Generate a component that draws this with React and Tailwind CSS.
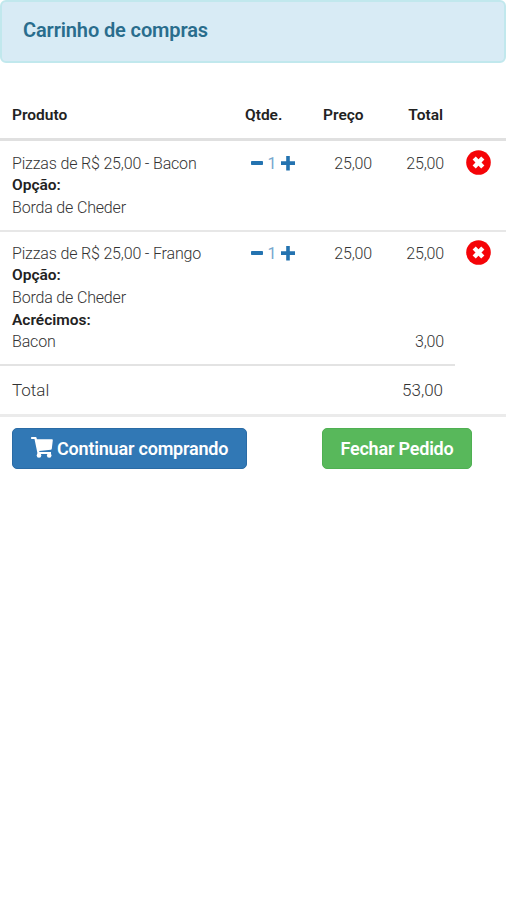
import React, { useState } from 'react';

const initialItems = [
  { id: 1, name: 'Pizzas de R$ 25,00 - Bacon', qty: 1, price: 25, option: 'Borda de Cheder', extras: [] },
  {
    id: 2,
    name: 'Pizzas de R$ 25,00 - Frango',
    qty: 1,
    price: 25,
    option: 'Borda de Cheder',
    extras: [{ name: 'Bacon', price: 3 }]
  }
];

const formatPrice = (value) => value.toFixed(2).replace('.', ',');

const MinusIcon = () => (
  <svg viewBox="0 0 12 15" className="w-3 h-[15px]" fill="currentColor">
    <rect x="0" y="5" width="12" height="4" rx="0.8" />
  </svg>
);

const PlusIcon = () => (
  <svg viewBox="0 0 14 15" className="w-3.5 h-[15px]" fill="currentColor">
    <path d="M5.2 0h3.6v5.2H14v3.8H8.8v5.5H5.2V9H0V5.2h5.2z" />
  </svg>
);

const RemoveIcon = () => (
  <svg viewBox="0 0 25 25" className="w-[25px] h-[25px]">
    <circle cx="12.5" cy="12.5" r="12.3" fill="#f50408" />
    <path d="M8.2 8l8.6 9M16.8 8l-8.6 9" stroke="#fff" strokeWidth="4.4" strokeLinecap="butt" />
  </svg>
);

const CartIcon = () => (
  <svg viewBox="0 0 22 22" className="w-[22px] h-[22px] mr-1 -mt-1" fill="currentColor">
    <path d="M0.6 1h4c.6 0 .9.3 1 .9l.3 1.4H21c.6 0 .9.4.8 1l-1 8.4c-.1.6-.5.9-1 1L8.2 14.9l.2 1.1h11.6v2H6.6L3.5 3H.6C-.2 3-.2 1 .6 1z" />
    <circle cx="8" cy="19.4" r="2.3" />
    <circle cx="18.2" cy="19.4" r="2.3" />
  </svg>
);

const App = () => {
  const [items, setItems] = useState(initialItems);

  const changeQty = (id, delta) => {
    setItems(prev => prev.map(i => (i.id === id ? { ...i, qty: Math.max(1, i.qty + delta) } : i)));
  };

  const removeItem = (id) => {
    setItems(prev => prev.filter(i => i.id !== id));
  };

  // Extras are charged once per unit
  const total = items.reduce(
    (sum, i) => sum + i.qty * (i.price + i.extras.reduce((s, e) => s + e.price, 0)),
    0
  );

  return (
    <div className="min-h-screen bg-white text-[#333] font-light font-['Roboto',sans-serif] text-[16px] leading-[22px] tracking-[-0.17px]">
      {/* Title */}
      <div className="h-[63px] rounded-md border-2 border-[#c1e8ed] bg-[#d8ebf5] pl-[21px] pt-[16px]">
        <h1 className="text-[20px] leading-[24px] font-semibold tracking-[-0.12px] text-[#296d8d]">Carrinho de compras</h1>
      </div>

      {/* Table header */}
      <div className="mt-[41px] grid grid-cols-[233px_78px_49px_71px] h-[37px] pl-3 border-b-3 border-[#e0e0e0] text-[15.5px] font-semibold tracking-normal text-[#222]">
        <span>Produto</span>
        <span>Qtde.</span>
        <span>Preço</span>
        <span className="text-right">Total</span>
      </div>

      {/* Items */}
      {items.map((item, index) => (
        <div
          key={item.id}
          className={index < items.length - 1 ? 'pt-3 pb-[11px] border-b-2 border-[#e7e7e7]' : 'pt-[11px] pb-[11px]'}
        >
          <div className="grid grid-cols-[239px_50px_71px_72px_auto] h-[22px] pl-3">
            <span>{item.name}</span>
            <div className="flex items-center -mt-px text-[#2473b0]">
              <button onClick={() => changeQty(item.id, -1)}><MinusIcon /></button>
              <span className="w-[18px] text-center font-normal text-[#76a7ce]">{item.qty}</span>
              <button onClick={() => changeQty(item.id, 1)}><PlusIcon /></button>
            </div>
            <span className="text-right">{formatPrice(item.price)}</span>
            <span className="text-right">{formatPrice(item.price * item.qty)}</span>
            <button onClick={() => removeItem(item.id)} className="-mt-[3px] ml-[22px] w-[25px] h-[25px]">
              <RemoveIcon />
            </button>
          </div>
          <div className="pl-3">
            <p className="h-[22px] leading-[21px] font-semibold text-[15.5px] tracking-normal text-[#222]">Opção:</p>
            <p>{item.option}</p>
            {item.extras.length > 0 && (
              <p className="h-[22px] leading-[22px] font-semibold text-[15.5px] tracking-normal text-[#222]">Acrécimos:</p>
            )}
            {item.extras.map(extra => (
              <div key={extra.name} className="flex justify-between w-[432px]">
                <span>{extra.name}</span>
                <span>{formatPrice(extra.price * item.qty)}</span>
              </div>
            ))}
          </div>
        </div>
      ))}

      {/* Total */}
      <div className="w-[455px] flex justify-between border-t-2 border-[#e3e3e3] pl-3 pr-3 pt-[13px] h-[50px] text-[17px] tracking-normal">
        <span>Total</span>
        <span>{formatPrice(total)}</span>
      </div>

      {/* Actions */}
      <div className="flex justify-between border-t-3 border-[#ebebeb] pl-3 pr-[34px] pt-[11px] text-[18px] font-semibold tracking-[-0.2px] text-white">
        <button className="flex items-center w-[235px] h-[41px] rounded-[5px] border border-[#2a6ba5] bg-[#3178b5] pl-[18px]">
          <CartIcon />
          Continuar comprando
        </button>
        <button className="w-[150px] h-[41px] rounded-[5px] border border-[#4fb052] bg-[#58b85b]">
          Fechar Pedido
        </button>
      </div>
    </div>
  );
};

export default App;
